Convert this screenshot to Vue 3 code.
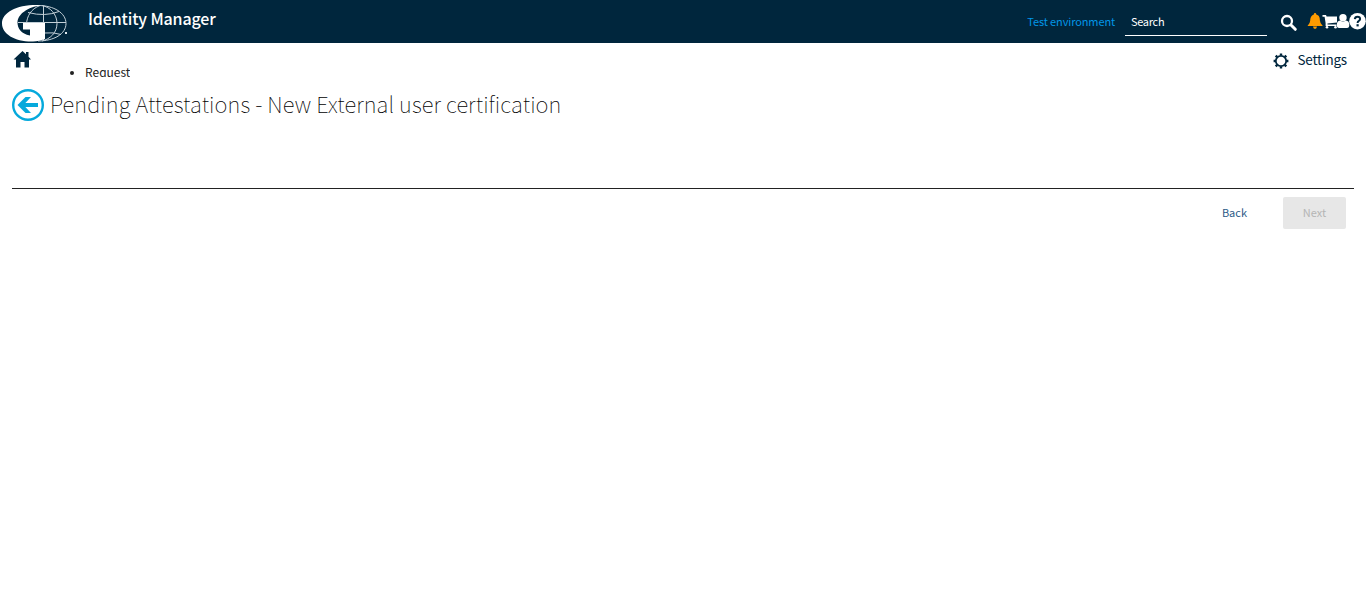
<script setup>
const crumbs = ['Request']
</script>

<template>
  <div class="page">
    <header class="top">
      <svg class="logo" width="70" height="43" viewBox="0 0 70 43">
        <g fill="none" stroke="#c3d0d8" stroke-width="1">
          <path d="M38 5.500C54 5.500 66 13 66 23.500S54 41 38 41" />
          <path d="M42 5.500C50 7 57 14 57 23.500S50 39 42 41M40 5.500C31 9 27 16 26.500 24" />
          <path d="M43.500 5.500V41M18 22.500H66M28 12.500Q45 17 59 11.500M44 33Q54 32 61 34.500" />
        </g>
        <path fill="#fff" d="M41 5.200C18 4 2 12 2 23.500C2 34 15 42 33 41.600C37 41.400 41 40.500 45 39V23H23V29.500H30V35.500C21 34 17.500 28 17.500 22.500C17.500 14 28 7 41 5.200Z" />
        <rect x="65" y="32" width="2" height="2" fill="#dfe8ee" />
      </svg>
      <span class="brand">Identity Manager</span>
      <span class="env">Test environment</span>
      <div class="search">Search</div>
      <svg class="find" width="18" height="18" viewBox="0 0 18 18" fill="none" stroke="#fff">
        <circle cx="7" cy="7" r="5" stroke-width="2.300" />
        <path d="M11 11L15.300 15.300" stroke-width="3" stroke-linecap="round" />
      </svg>
      <svg class="tools" width="59" height="18" viewBox="0 0 59 18">
        <path fill="#ff9b00" d="M8 1Q9.300 1 9.300 2.400C12.500 3.200 12.900 6 12.900 8.500Q13 11.500 15.800 14H.5Q3.100 11.500 3.200 8.500C3.200 6 4 3.200 6.800 2.400Q6.800 1 8 1ZM6 14.600H10Q9.800 17 8 17T6 14.600Z" />
        <g fill="#fff">
          <path d="M15.500 3H19L19.600 4.500H30V10.500L20.500 11.500V12.500H29.500V14H18.600V11L17.600 4.800H15.500Z" />
          <circle cx="20" cy="15.300" r="1.300" /><circle cx="28.500" cy="15.300" r="1.300" />
          <circle cx="36" cy="5.700" r="3.700" />
          <path d="M29.800 13Q29.800 8.800 33 8.500Q36 10.800 39 8.500Q42.300 8.800 42.300 13Q42.300 16 40 16H32Q29.800 16 29.800 13Z" />
          <circle cx="50.500" cy="9.200" r="8.300" />
        </g>
        <path d="M47.800 7.200Q48 4.700 50.500 4.700T53.100 7Q53.100 8.200 51.800 8.900Q50.600 9.500 50.600 11" fill="none" stroke="#00263d" stroke-width="2" />
        <rect x="49.500" y="12.200" width="2.200" height="2.200" fill="#00263d" />
      </svg>
    </header>

    <nav class="nav">
      <svg class="home" width="18" height="17" viewBox="0 0 18 17">
        <path fill="#00263d" d="M9.500 0L13 3.300V1H15.500V5.700L18 8.500H16V16.500H11.500V11H7.500V16.500H3V8.500H.5Z" />
      </svg>
      <ul class="crumbs"><li v-for="c in crumbs" :key="c">{{ c }}</li></ul>
      <svg class="gear" width="16" height="16" viewBox="0 0 16 16" fill="none" stroke="#00263d">
        <circle cx="8" cy="8" r="5.200" stroke-width="1.800" />
        <path stroke-width="2.400" d="M8 .6V2.600M8 13.400V15.400M.6 8H2.600M13.400 8H15.400M2.700 2.700L4.200 4.200M11.800 11.800L13.300 13.300M2.700 13.300L4.200 11.800M11.800 4.200L13.300 2.700" />
      </svg>
      <span class="settings">Settings</span>
    </nav>

    <div class="title">
      <svg width="32" height="32" viewBox="0 0 32 32" fill="none" stroke="#05a9dc">
        <circle cx="16" cy="16" r="14.800" stroke-width="2.400" />
        <path d="M9 16H26" stroke-width="4" />
        <path fill="#05a9dc" stroke="none" d="M5.500 16L13.500 8H19L11.500 16L19 24H13.500Z" />
      </svg>
      <h1>Pending Attestations - New External user certification</h1>
    </div>

    <footer class="actions">
      <span class="back">Back</span>
      <button class="next" disabled>Next</button>
    </footer>
  </div>
</template>

<style>
body { background: #fff; }
</style>

<style scoped>
.page { height: 613px; overflow: hidden; font-family: "Noto Sans CJK SC", "Open Sans", sans-serif; color: #222; }
.top { height: 43px; background: #00263d; display: flex; align-items: flex-start; color: #fff; }
.logo { flex: none; }
.brand { margin-left: 18px; font-size: 16px; line-height: 24px; margin-top: 6px; font-weight: 500; letter-spacing: -0.14px; white-space: nowrap; }
.env { margin-left: auto; color: #0296e8; font-size: 11px; line-height: 16px; margin-top: 13px; letter-spacing: -0.12px; white-space: nowrap; }
.search { box-sizing: border-box; margin-left: 10px; width: 142px; height: 36px; padding: 13px 0 0 6px; border-bottom: 1px solid #fff; font-size: 11px; line-height: 16px; letter-spacing: -0.3px; }
.find { margin: 14px 0 0 13px; flex: none; }
.tools { margin: 12px 0 0 9px; flex: none; }
.nav { height: 46px; display: flex; align-items: flex-start; }
.home { margin: 8px 1px 0 13px; }
.crumbs { margin: 20px 0 0 38px; padding: 0; list-style: none; font-size: 12px; line-height: 18px; height: 14px; overflow: hidden; }
.crumbs li { display: flex; align-items: center; height: 18px; }
.crumbs li::before { content: ""; width: 4px; height: 4px; border-radius: 50%; background: #222; margin: 1px 11px 0 0; }
.gear { margin: 10px 0 0 auto; }
.settings { margin: 6px 19px 0 8px; font-size: 13.5px; line-height: 20px; color: #00263d; letter-spacing: -0.2px; }
.title { display: flex; height: 32px; padding-left: 12px; }
.title svg { flex: none; }
h1 { margin: -2px 0 0 6px; font-size: 22px; line-height: 32px; font-weight: 100; letter-spacing: 0.1px; color: #000; white-space: nowrap; }
.actions { margin: 67px 12px 0; border-top: 1px solid #222; display: flex; justify-content: flex-end; padding: 8px 8px 0 0; font-size: 11px; line-height: 30px; }
.back { color: #2d5b87; margin-right: 36px; }
.next { width: 63px; height: 32px; padding: 0 0 2px; border: 0; border-radius: 2px; background: #e7e7e7; color: #b5b5b5; font: inherit; }
</style>
